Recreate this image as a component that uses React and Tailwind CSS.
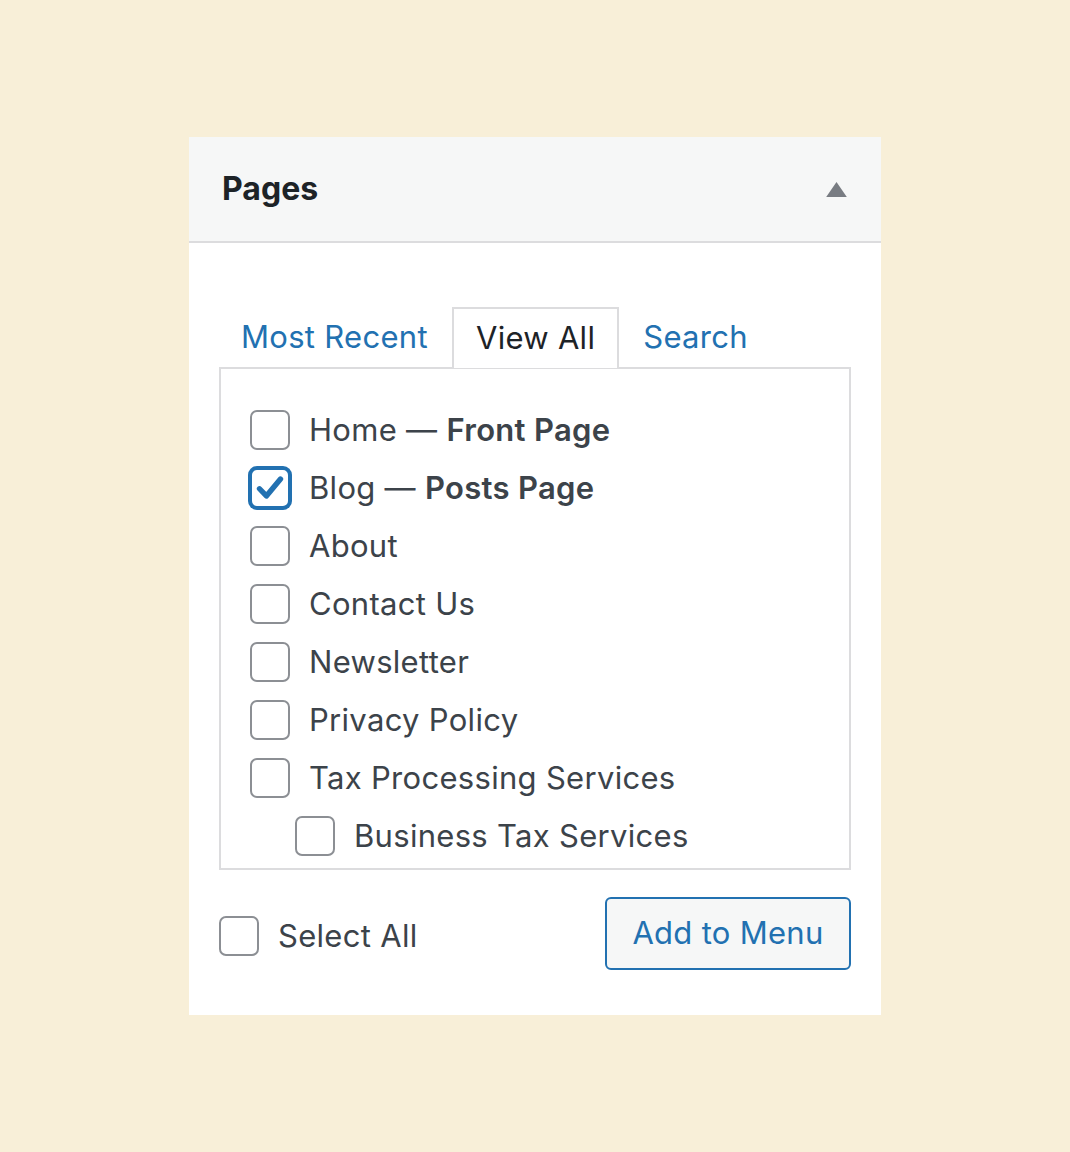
import React, { useState } from 'react';

const pages = [
  { id: 1, label: 'Home', note: 'Front Page' },
  { id: 2, label: 'Blog', note: 'Posts Page' },
  { id: 3, label: 'About' },
  { id: 4, label: 'Contact Us' },
  { id: 5, label: 'Newsletter' },
  { id: 6, label: 'Privacy Policy' },
  { id: 7, label: 'Tax Processing Services' },
  { id: 8, label: 'Business Tax Services', child: true },
];

function Checkbox({ checked, onChange }) {
  return (
    <button
      type="button"
      onClick={onChange}
      className={`w-[40px] h-[40px] shrink-0 rounded-[7px] bg-white flex items-center justify-center ${
        checked ? 'border-2 border-[#2271b1] ring-2 ring-[#2271b1]' : 'border-2 border-[#8c8f94]'
      }`}
    >
      {checked && (
        <svg viewBox="0 0 24 24" className="w-[36px] h-[36px]" fill="none" stroke="#2271b1" strokeWidth={3.6} strokeLinecap="round" strokeLinejoin="round">
          <path d="M5 12.5l4.6 4.8L19 6" />
        </svg>
      )}
    </button>
  );
}

export default function App() {
  const [checked, setChecked] = useState({ 2: true });
  const [tab, setTab] = useState('View All');
  const toggle = (id) => setChecked((prev) => ({ ...prev, [id]: !prev[id] }));

  return (
    <div className="min-h-screen bg-[#f8efd8] pt-[137px] font-['Inter','Noto_Sans',sans-serif]">
      <div className="w-[692px] bg-white ml-[189px]">
        <div className="h-[106px] bg-[#f6f7f7] border-b-2 border-[#dcdcde] flex items-center justify-between pl-[33px] pr-[34px]">
          <h2 className="text-[32px] font-bold text-[#1d2327]">Pages</h2>
          <svg viewBox="0 0 22 16" className="w-[21px] h-[15px]" fill="#787c82">
            <path d="M11 0L22 16H0z" />
          </svg>
        </div>

        <div className="px-[30px] pt-[64px] pb-[45px]">
          <div className="flex gap-[2px] relative z-10">
            {['Most Recent', 'View All', 'Search'].map((t) => (
              <button
                key={t}
                onClick={() => setTab(t)}
                className={`h-[61px] px-[22px] text-[31px] tracking-[0.3px] -mb-px ${
                  tab === t
                    ? 'bg-white border-2 border-b-0 border-[#dcdcde] text-[#1d2327] px-[20px]'
                    : 'text-[#2271b1]'
                }`}
              >
                {t}
              </button>
            ))}
          </div>

          <div className="h-[503px] border-2 border-[#dcdcde] pt-[41px] pl-[29px] flex flex-col gap-[18px] overflow-hidden">
            {pages.map((p) => (
              <label key={p.id} className={`flex items-center gap-[19px] text-[31px] tracking-[0.3px] text-[#3c434a] ${p.child ? 'pl-[45px]' : ''}`}>
                <Checkbox checked={!!checked[p.id]} onChange={() => toggle(p.id)} />
                <span className="leading-[40px] whitespace-nowrap">
                  {p.label}
                  {p.note && (
                    <>
                      {' — '}
                      <strong className="font-semibold">{p.note}</strong>
                    </>
                  )}
                </span>
              </label>
            ))}
          </div>

          <div className="flex items-center justify-between mt-[27px]">
            <label className="flex items-center gap-[19px] text-[31px] tracking-[0.3px] text-[#3c434a] mt-[5px]">
              <Checkbox checked={false} onChange={() => {}} />
              <span>Select All</span>
            </label>
            <button className="w-[246px] h-[73px] rounded-[6px] border-2 border-[#2271b1] bg-[#f6f7f7] text-[#2271b1] text-[31px] tracking-[0.3px]">
              Add to Menu
            </button>
          </div>
        </div>
      </div>
    </div>
  );
}
